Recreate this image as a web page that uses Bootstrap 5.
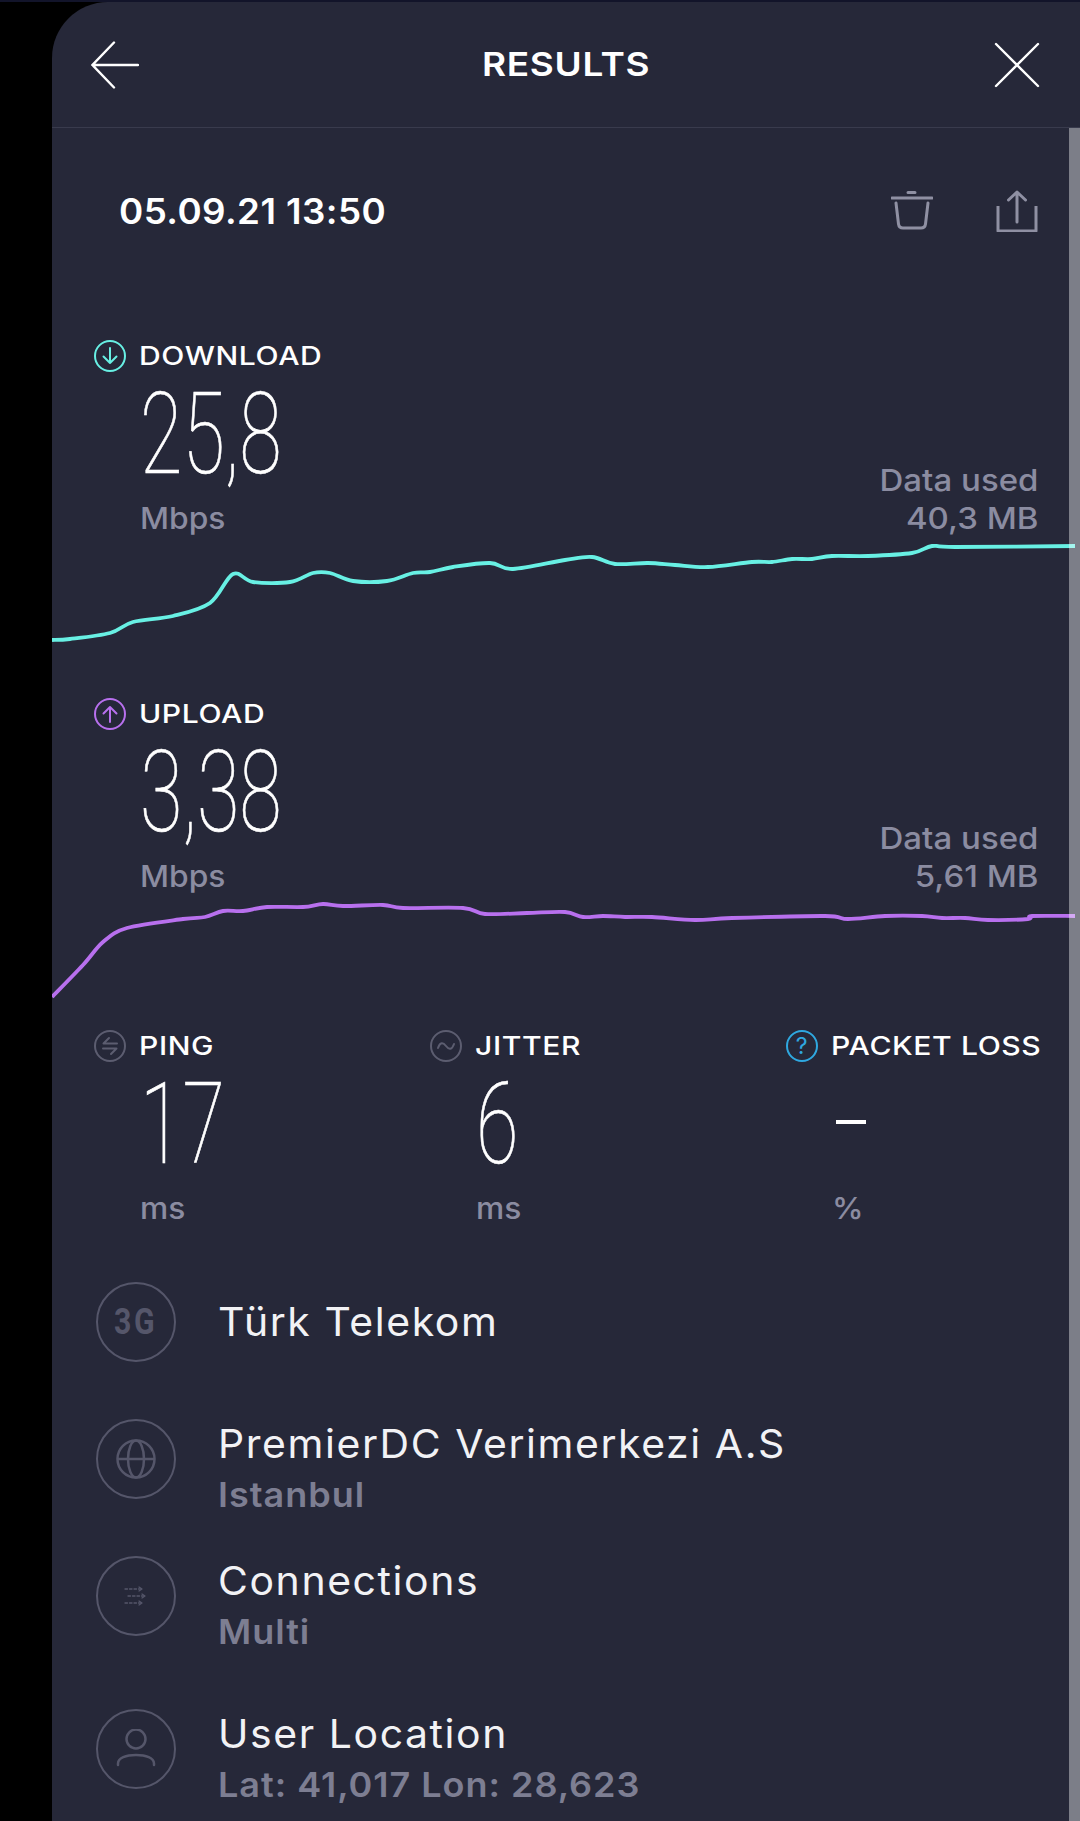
<!DOCTYPE html>
<html lang="en">
<head>
  <meta charset="UTF-8" />
  <meta name="viewport" content="width=device-width, initial-scale=1" />
  <title>Results</title>
  <link href="https://cdn.jsdelivr.net/npm/bootstrap@5.3.3/dist/css/bootstrap.min.css" rel="stylesheet">
  <style>
    html, body {
      height: 1821px;
      overflow: hidden;
      background-color: #000;
    }
    body {
      font-family: Inter, "Liberation Sans", sans-serif;
      color: #fff;
    }
    .top-strip {
      height: 2px;
      background-color: #12142a;
    }
    .panel-main {
      margin-left: 52px;
      height: 1819px;
      background-color: #262839;
      border-top-left-radius: 56px;
      overflow: hidden;
    }
    .wide-text {
      display: inline-block;
      transform-origin: left center;
    }
    .head-bar {
      height: 126px;
      padding: 0 39px;
      border-bottom: 1px solid #393b4d;
    }
    .head-title {
      font-size: 33px;
      font-weight: 600;
      letter-spacing: .6px;
      transform: scaleX(1.12);
    }
    .scroll-thumb {
      width: 11px;
      background-color: rgba(255, 255, 255, .4);
      position: relative;
      z-index: 2;
    }
    .date-row {
      height: 42px;
      margin-top: 62px;
      margin-bottom: 107px;
      padding-left: 67px;
      padding-right: 31px;
    }
    .date-text {
      font-size: 35px;
      font-weight: 600;
      letter-spacing: .4px;
      transform: scaleX(1.05);
    }
    .date-icons {
      gap: 63px;
      color: #8f90a3;
    }
    .metric-block {
      height: 358px;
    }
    .metric-block.short {
      height: 332px;
    }
    .metric-top {
      height: 204px;
      padding-left: 42px;
      padding-right: 31px;
    }
    .metric-label {
      height: 34px;
      gap: 13px;
      font-size: 25.5px;
      font-weight: 500;
      letter-spacing: .5px;
    }
    .metric-label .wide-text {
      transform: scaleX(1.18);
    }
    .big-num {
      height: 120px;
      padding-left: 46px;
      line-height: 122px;
    }
    .big-num span {
      display: inline-block;
      font-family: Roboto, sans-serif;
      font-weight: 100;
      font-size: 114px;
      -webkit-text-stroke: .7px #fff;
      transform: scaleX(.68);
      transform-origin: left center;
    }
    .unit-text {
      height: 50px;
      padding-left: 46px;
      font-size: 30px;
      font-weight: 500;
      line-height: 50px;
      color: #8b8ca1;
    }
    .unit-text .wide-text {
      transform: scaleX(1.06);
    }
    .data-used {
      font-size: 30px;
      font-weight: 500;
      line-height: 38px;
      color: #8b8ca1;
      text-align: right;
      margin-bottom: 6px;
      transform: scaleX(1.1);
      transform-origin: right center;
    }
    .line-chart {
      display: block;
      width: 1017px;
      height: 110px;
      margin-top: -3px;
      overflow: visible;
      fill: none;
      stroke-width: 3.8;
      stroke-linejoin: round;
    }
    .stat-row {
      height: 253px;
      padding-left: 42px;
    }
    .stat-ping { width: 336px; }
    .stat-jitter { width: 356px; }
    .dash-num {
      height: 120px;
      padding-left: 50px;
      padding-top: 57px;
    }
    .dash-num span {
      display: block;
      width: 30px;
      height: 4px;
      background-color: #fff;
    }
    .info-row {
      height: 137px;
      padding-left: 44px;
      gap: 42px;
    }
    .info-row.tall { height: 153px; }
    .round-icon {
      width: 80px;
      height: 80px;
      flex: none;
      border: 2.5px solid #55566a;
      border-radius: 50%;
      color: #55566a;
    }
    .net-label {
      font-family: Roboto, sans-serif;
      font-size: 36px;
      font-weight: 700;
      letter-spacing: 3px;
    }
    .net-label span {
      display: inline-block;
      transform: scaleX(.84);
    }
    .q-icon {
      width: 32px;
      height: 32px;
      border: 2px solid #2fa8e0;
      border-radius: 50%;
      color: #2fa8e0;
      font-size: 23px;
      font-weight: 400;
    }
    .single-line {
      height: 80px;
    }
    .info-title {
      font-size: 39px;
      line-height: 50px;
      letter-spacing: 1.5px;
      color: #f2f2f5;
      transform: scaleX(1.05);
    }
    .info-sub {
      margin-top: 2px;
      font-size: 34px;
      font-weight: 600;
      line-height: 48px;
      letter-spacing: .9px;
      color: #7d7e92;
      transform: scaleX(1.06);
    }
  </style>
</head>
<body>

<div class="top-strip"></div>
<div class="panel-main d-flex flex-column">

  <div class="head-bar d-flex align-items-center justify-content-between flex-shrink-0">
    <svg width="48" height="48" viewBox="0 0 48 48" fill="none" stroke="#fff" stroke-width="2.4" stroke-linecap="round">
      <path d="M23 1.5L1.5 24L23 46.5M1.5 24H47"/>
    </svg>
    <div class="head-title">RESULTS</div>
    <svg width="48" height="48" viewBox="0 0 48 48" fill="none" stroke="#fff" stroke-width="2.4" stroke-linecap="round">
      <path d="M3 3L45 45M45 3L3 45"/>
    </svg>
  </div>

  <div class="d-flex flex-grow-1">
    <div class="flex-grow-1">

      <div class="date-row d-flex align-items-center justify-content-between">
        <div class="date-text wide-text">05.09.21 13:50</div>
        <div class="date-icons d-flex">
          <svg width="42" height="42" viewBox="0 0 42 42" fill="none" stroke="currentColor" stroke-width="3" stroke-linecap="round">
            <path d="M1 8H41M17 2.5H24M5 13L7.5 34Q8 38 12 38H30Q34 38 34.500 34L37 13"/>
          </svg>
          <svg width="42" height="42" viewBox="0 0 42 42" fill="none" stroke="currentColor" stroke-width="3" stroke-linejoin="round">
            <path d="M2 16V41H40V16"/>
            <path stroke-linecap="round" d="M21 32V2M12.500 10L21 2L29.500 10"/>
          </svg>
        </div>
      </div>

      <div class="metric-block">
        <div class="metric-top d-flex justify-content-between align-items-end">
          <div>
            <div class="metric-label d-flex align-items-center">
              <svg width="32" height="32" viewBox="0 0 32 32" fill="none" stroke="#68f0e4" stroke-width="2" stroke-linecap="round" stroke-linejoin="round">
                <circle cx="16" cy="16" r="15"/>
                <path d="M16 8V23M9.500 16.500L16 23L22.500 16.500"/>
              </svg>
              <span class="wide-text">DOWNLOAD</span>
            </div>
            <div class="big-num"><span>25,8</span></div>
            <div class="unit-text"><span class="wide-text">Mbps</span></div>
          </div>
          <div class="data-used">Data used<br>40,3 MB</div>
        </div>
        <svg class="line-chart" id="downChart" stroke="#68f0e4"><path/></svg>
      </div>

      <div class="metric-block short">
        <div class="metric-top d-flex justify-content-between align-items-end">
          <div>
            <div class="metric-label d-flex align-items-center">
              <svg width="32" height="32" viewBox="0 0 32 32" fill="none" stroke="#b870ee" stroke-width="2" stroke-linecap="round" stroke-linejoin="round">
                <circle cx="16" cy="16" r="15"/>
                <path d="M16 24V9M9.500 15.500L16 9L22.500 15.500"/>
              </svg>
              <span class="wide-text">UPLOAD</span>
            </div>
            <div class="big-num"><span>3,38</span></div>
            <div class="unit-text"><span class="wide-text">Mbps</span></div>
          </div>
          <div class="data-used">Data used<br>5,61 MB</div>
        </div>
        <svg class="line-chart" id="upChart" stroke="#b870ee"><path/></svg>
      </div>

      <div class="stat-row d-flex">
        <div class="stat-ping">
          <div class="metric-label d-flex align-items-center">
            <svg width="32" height="32" viewBox="0 0 32 32" fill="none" stroke="#5c5d70" stroke-width="2" stroke-linecap="round" stroke-linejoin="round">
              <circle cx="16" cy="16" r="15"/>
              <path d="M23 13.500H9.500L15 8M9 18.500H22.500L17 24"/>
            </svg>
            <span class="wide-text">PING</span>
          </div>
          <div class="big-num"><span>17</span></div>
          <div class="unit-text"><span class="wide-text">ms</span></div>
        </div>
        <div class="stat-jitter">
          <div class="metric-label d-flex align-items-center">
            <svg width="32" height="32" viewBox="0 0 32 32" fill="none" stroke="#5c5d70" stroke-width="2" stroke-linecap="round">
              <circle cx="16" cy="16" r="15"/>
              <path d="M8 18C10 12 13 12 16 16S22 20 24 14"/>
            </svg>
            <span class="wide-text">JITTER</span>
          </div>
          <div class="big-num"><span>6</span></div>
          <div class="unit-text"><span class="wide-text">ms</span></div>
        </div>
        <div>
          <div class="metric-label d-flex align-items-center">
            <div class="q-icon d-flex align-items-center justify-content-center">?</div>
            <span class="wide-text">PACKET LOSS</span>
          </div>
          <div class="dash-num"><span></span></div>
          <div class="unit-text"><span class="wide-text">%</span></div>
        </div>
      </div>

      <div class="info-row d-flex">
        <div class="round-icon d-flex align-items-center justify-content-center net-label"><span>3G</span></div>
        <div class="single-line d-flex align-items-center">
          <div class="info-title wide-text">Türk Telekom</div>
        </div>
      </div>

      <div class="info-row d-flex">
        <div class="round-icon d-flex align-items-center justify-content-center">
          <svg width="40" height="40" viewBox="0 0 40 40" fill="none" stroke="currentColor" stroke-width="2.500">
            <circle cx="20" cy="20" r="18.500"/>
            <ellipse cx="20" cy="20" rx="8" ry="18.500"/>
            <path d="M1.500 20H38.500"/>
          </svg>
        </div>
        <div>
          <div class="info-title wide-text d-block">PremierDC Verimerkezi A.S</div>
          <div class="info-sub wide-text d-block">Istanbul</div>
        </div>
      </div>

      <div class="info-row tall d-flex">
        <div class="round-icon d-flex align-items-center justify-content-center">
          <svg width="24" height="20" viewBox="0 0 24 20" fill="none" stroke="currentColor" stroke-width="1.300" stroke-linecap="round" stroke-linejoin="round">
            <path stroke-dasharray="2.500 2" d="M1 3H17M4 10H20M1 17H17"/>
            <path d="M15 1L18 3L15 5M18 8L21 10L18 12M15 15L18 17L15 19"/>
          </svg>
        </div>
        <div>
          <div class="info-title wide-text d-block">Connections</div>
          <div class="info-sub wide-text d-block">Multi</div>
        </div>
      </div>

      <div class="info-row d-flex">
        <div class="round-icon d-flex align-items-center justify-content-center">
          <svg width="40" height="40" viewBox="0 0 40 40" fill="none" stroke="currentColor" stroke-width="2.500" stroke-linecap="round">
            <circle cx="20" cy="10" r="9.500"/>
            <path d="M2 36V34.500C2 29 10 26 20 26S38 29 38 34.500V36"/>
          </svg>
        </div>
        <div>
          <div class="info-title wide-text d-block">User Location</div>
          <div class="info-sub wide-text d-block">Lat: 41,017 Lon: 28,623</div>
        </div>
      </div>

    </div>
    <div class="scroll-thumb flex-shrink-0"></div>
  </div>
</div>

<script src="https://cdn.jsdelivr.net/npm/bootstrap@5.3.3/dist/js/bootstrap.bundle.min.js"></script>
<script>
// sampled off the graph, page x / y
const downData = [[52,640],[70,639],[110,633],[133,622],[173,616],[210,603],[233,574],[253,582],[290,582],[313,573],[330,573],[353,581],[387,581],[413,573],[430,572],[453,567],[490,563],[513,569],[565,560],[592,557],[615,564],[648,563],[675,565],[708,567],[752,562],[772,562],[792,559],[812,559],[832,556],[868,556],[912,553],[932,546],[955,547],[1075,546]];
const upData = [[52,997],[83,965],[103,942],[127,928],[183,919],[205,917],[223,911],[243,911],[267,907],[303,907],[323,904],[343,906],[383,905],[403,908],[463,908],[485,914],[527,913],[565,912],[583,917],[603,916],[625,917],[652,917],[695,920],[732,918],[825,916],[848,919],[885,916],[922,916],[942,918],[965,918],[988,920],[1028,919],[1032,916],[1075,916]];

function smoothPath(points, topY) {
  const p = points.map(([x, y]) => [x - 52, y - topY]);
  let d = `M${p[0][0]} ${p[0][1]}`;
  for (let i = 0; i < p.length - 1; i++) {
    const a = p[i - 1] || p[i];
    const b = p[i];
    const c = p[i + 1];
    const e = p[i + 2] || c;
    const c1 = [b[0] + (c[0] - a[0]) / 6, b[1] + (c[1] - a[1]) / 6];
    const c2 = [c[0] - (e[0] - b[0]) / 6, c[1] - (e[1] - b[1]) / 6];
    d += `C${c1[0]} ${c1[1]} ${c2[0]} ${c2[1]} ${c[0]} ${c[1]}`;
  }
  return d;
}

document.querySelector('#downChart path').setAttribute('d', smoothPath(downData, 540));
document.querySelector('#upChart path').setAttribute('d', smoothPath(upData, 898));
</script>

</body>
</html>
